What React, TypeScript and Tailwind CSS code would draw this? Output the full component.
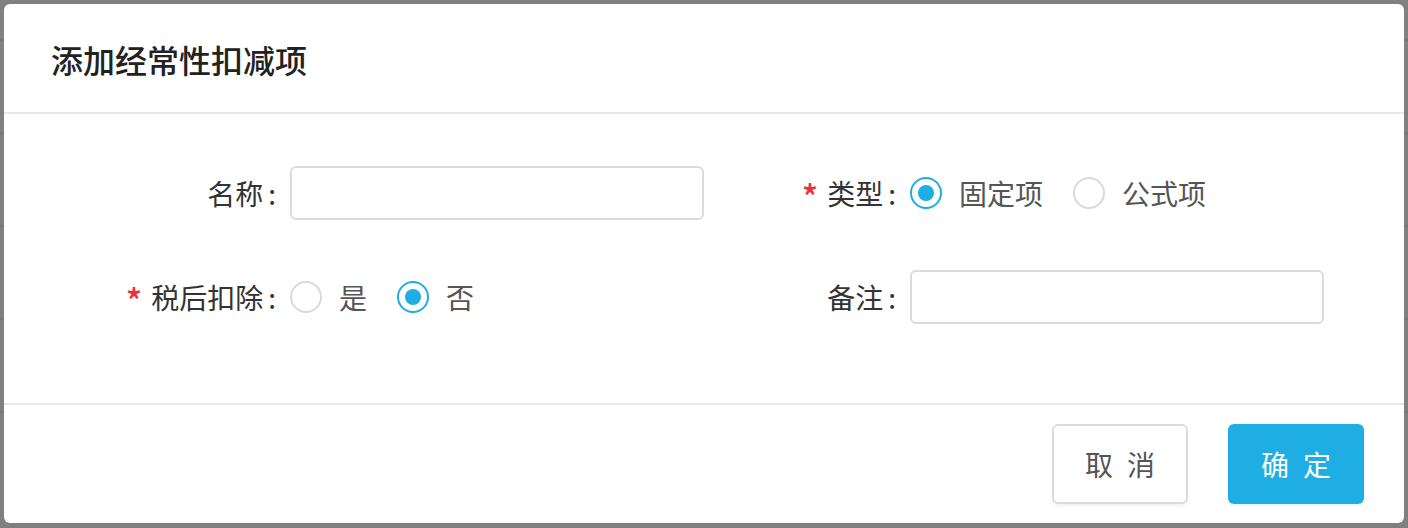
import React, { useState } from "react";

const font = { fontFamily: '"Noto Sans CJK SC", "Noto Sans", sans-serif' };

interface RadioProps {
  label: string;
  checked: boolean;
  onClick: () => void;
}

function Radio(props: RadioProps) {
  return (
    <div className="flex items-center cursor-pointer mr-[30px]" onClick={props.onClick}>
      {props.checked ? (
        <span className="flex items-center justify-center w-[32px] h-[32px] rounded-full border-2 border-[#1eaee3]">
          <span className="w-[16px] h-[16px] rounded-full bg-[#1eaee3]"></span>
        </span>
      ) : (
        <span className="w-[32px] h-[32px] rounded-full border-2 border-[#d9d9d9]"></span>
      )}
      <span className="ml-[17px] text-[28px] leading-none text-[#555]">{props.label}</span>
    </div>
  );
}

function Label({ text, required }: { text: string; required?: boolean }) {
  return (
    <div className="w-[200px] shrink-0 flex items-center justify-end pr-[14px] text-[28px] leading-none text-[#333]">
      {required && <span className="text-[#ee2d3b] mr-[9px] text-[34px] font-medium leading-none pt-[6px]">*</span>}
      <span>{text}</span>
      <span className="ml-[5px]">:</span>
    </div>
  );
}

export default function App() {
  const [kind, setKind] = useState<string>("fixed");
  const [afterTax, setAfterTax] = useState<boolean>(false);

  return (
    <div className="relative w-[1408px] h-[528px] overflow-hidden bg-[#808080]" style={font}>
      {/* table behind the backdrop */}
      <div className="flex flex-col">
        <div className="h-[41px] border-b-2 border-[#777]"></div>
        <div className="h-[93px] border-b-2 border-[#777]"></div>
        <div className="h-[93px] border-b-2 border-[#777]"></div>
        <div className="h-[93px] border-b-2 border-[#777]"></div>
        <div className="h-[93px] border-b-2 border-[#777]"></div>
      </div>

      <div className="absolute left-[4px] right-[4px] top-[4px] bottom-[5px] rounded-[6px] bg-white flex flex-col">
        <div className="h-[110px] flex items-center pl-[47px] pt-[2px] border-b-2 border-[#e8e8e8]">
          <h2 className="text-[32px] leading-none font-medium text-[#222]">添加经常性扣减项</h2>
        </div>

        <div className="flex-1 pl-[86px] pt-[52px] flex flex-col gap-[50px]">
          <div className="flex h-[54px]">
            <div className="w-[620px] flex">
              <Label text="名称" />
              <input className="w-[414px] h-[54px] rounded-[6px] border-2 border-[#dcdcdc] outline-none px-3 text-[28px]" />
            </div>
            <div className="w-[620px] flex">
              <Label text="类型" required />
              <div className="flex items-center">
                <Radio label="固定项" checked={kind === "fixed"} onClick={() => setKind("fixed")} />
                <Radio label="公式项" checked={kind === "formula"} onClick={() => setKind("formula")} />
              </div>
            </div>
          </div>
          <div className="flex h-[54px]">
            <div className="w-[620px] flex">
              <Label text="税后扣除" required />
              <div className="flex items-center">
                <Radio label="是" checked={afterTax} onClick={() => setAfterTax(true)} />
                <Radio label="否" checked={!afterTax} onClick={() => setAfterTax(false)} />
              </div>
            </div>
            <div className="w-[620px] flex">
              <Label text="备注" />
              <input className="w-[414px] h-[54px] rounded-[6px] border-2 border-[#dcdcdc] outline-none px-3 text-[28px]" />
            </div>
          </div>
        </div>

        <div className="h-[120px] border-t-2 border-[#e8e8e8] flex justify-end items-start pt-[19px] pr-[40px] gap-[40px]">
          <button className="w-[136px] h-[80px] rounded-[6px] border-2 border-[#dcdcdc] bg-white text-[28px] text-[#555] tracking-[14px] pl-[14px] shadow-[0_2px_3px_rgba(0,0,0,0.05)]">
            取消
          </button>
          <button className="w-[136px] h-[80px] rounded-[6px] bg-[#1eaee3] text-[28px] text-white tracking-[14px] pl-[14px] shadow-[0_2px_3px_rgba(0,0,0,0.06)]">
            确定
          </button>
        </div>
      </div>
    </div>
  );
}
